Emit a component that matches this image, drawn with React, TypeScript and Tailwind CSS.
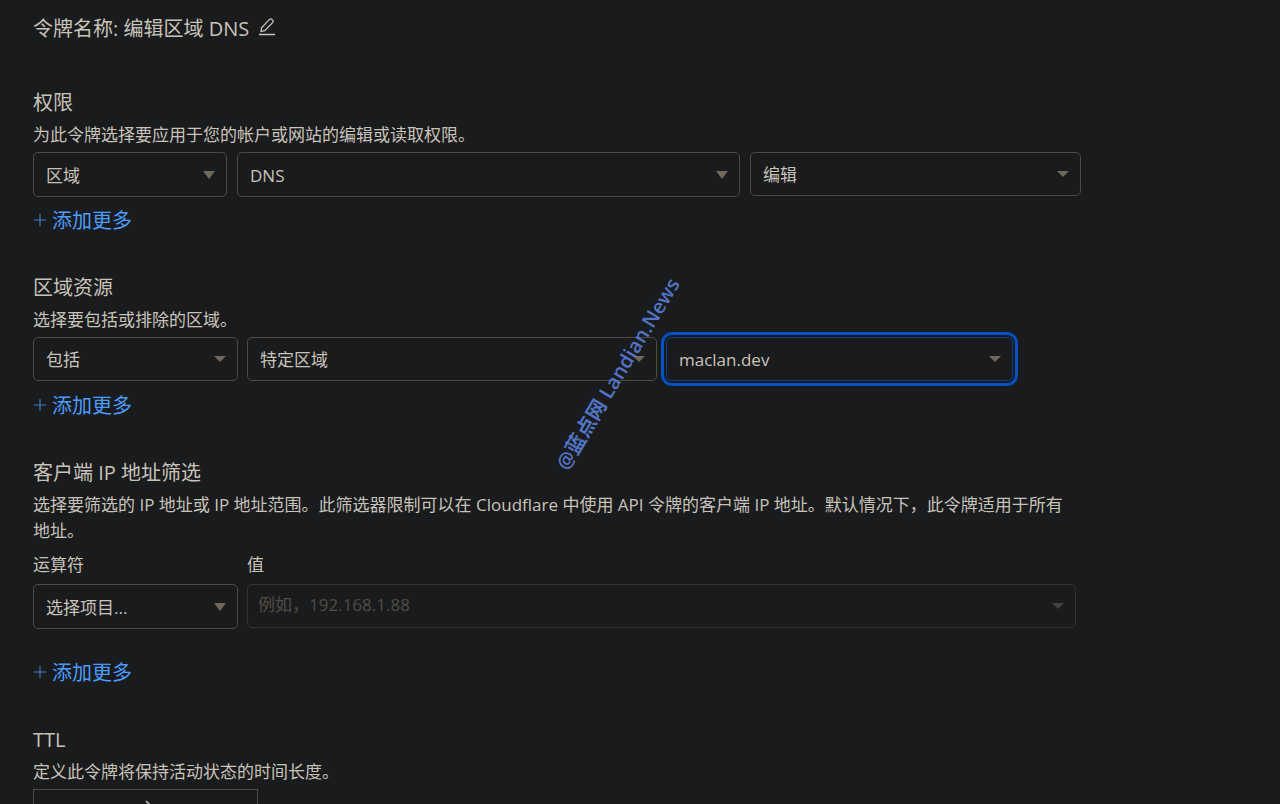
import { useId, useState } from "react";
import clsx from "clsx";

type SelectProps = {
  label: string;
  options: string[];
  tall?: boolean;
  focused?: boolean;
};

function Caret({ tall }: { tall?: boolean }) {
  return (
    <svg
      viewBox="0 0 12 8"
      className={clsx("pointer-events-none absolute top-1/2 right-3 w-3 -translate-y-1/2 fill-[#6f685d]", tall ? "h-2" : "h-1.5")}
      preserveAspectRatio="none"
      aria-hidden="true"
    >
      <path d="M0 0h12L6 8z" />
    </svg>
  );
}

function Select({ label, options, tall, focused }: SelectProps) {
  const [value, setValue] = useState(options[0]);

  return (
    <div
      className={clsx(
        "relative rounded-md",
        tall ? "h-[45px]" : "h-11",
        focused && "outline-3 outline-offset-2 outline-[#0051c3]"
      )}
    >
      <select
        aria-label={label}
        value={value}
        onChange={(e) => setValue(e.target.value)}
        className={clsx(
          "h-full w-full appearance-none rounded-[5px] border bg-transparent pt-0.5 pr-8 pl-3 text-[17px] outline-none",
          focused ? "border-[#0b3f8c]" : "border-[#4f4a42]"
        )}
      >
        {options.map((option) => (
          <option key={option}>{option}</option>
        ))}
      </select>
      <Caret tall={tall} />
    </div>
  );
}

function AddMore() {
  return (
    <button type="button" className="flex h-8 items-center gap-1.5 text-[20px] leading-8 text-[#4a9dff]">
      <svg viewBox="0 0 12 12" className="mb-0.5 ml-px h-3 w-3 stroke-[#3f83c4]" aria-hidden="true">
        <path d="M6 0v12M0 6h12" strokeWidth="1.1" />
      </svg>
      添加更多
    </button>
  );
}

function SectionHeader({ title, children }: { title: string; children: string }) {
  return (
    <header className="mb-1">
      <h2 className="text-[20px] leading-[38px]">{title}</h2>
      <p className="text-[17px] leading-[26px]">{children}</p>
    </header>
  );
}

function IpFilter() {
  const valueId = useId();

  return (
    <div className="mt-2 grid grid-cols-[205fr_829fr] gap-x-[9px]">
      <div>
        <div className="mb-1.5 text-[17px] leading-[26px]">运算符</div>
        <Select label="运算符" options={["选择项目..."]} tall />
      </div>
      <div>
        <label htmlFor={valueId} className="mb-1.5 block text-[17px] leading-[26px]">
          值
        </label>
        <div className="relative h-11 opacity-50">
          <input
            id={valueId}
            disabled
            placeholder="例如，192.168.1.88"
            className="h-full w-full rounded-[5px] border border-[#4f4a42] bg-transparent px-2.5 pb-1 text-[17px] placeholder:text-[#857e73]"
          />
          <Caret />
        </div>
      </div>
    </div>
  );
}

export default function App() {
  return (
    <main className="h-screen overflow-hidden bg-[#1a1b1c] pt-2.5 pr-8 pl-[33px] font-['Open_Sans','Noto_Sans_CJK_SC',sans-serif] text-[#c8c3ba]">
      <div className="relative max-w-[1048px]">
        <h1 className="mb-9 flex items-center gap-2.5 text-[20px] leading-[38px]">
          令牌名称: 编辑区域 DNS
          <button type="button" aria-label="编辑令牌名称">
            <svg viewBox="0 0 16 18" className="mb-1 h-[18px] w-4 fill-none stroke-current" aria-hidden="true">
              <path
                d="M2 13.5 2.5 9.8 10.3 1.6Q11.6.3 13 1.5L13.6 2.1Q14.7 3.4 13.6 4.6L5.8 12.6ZM0 16.5h16"
                strokeWidth="1.3"
              />
            </svg>
          </button>
        </h1>

        <section className="mb-8">
          <SectionHeader title="权限">为此令牌选择要应用于您的帐户或网站的编辑或读取权限。</SectionHeader>
          <div className="mb-2 grid grid-cols-[194fr_503fr_331fr] gap-2.5">
            <Select label="权限范围" options={["区域", "帐户", "用户"]} tall />
            <Select label="权限项目" options={["DNS"]} tall />
            <Select label="访问级别" options={["编辑", "读取"]} />
          </div>
          <AddMore />
        </section>

        <section className="mb-8">
          <SectionHeader title="区域资源">选择要包括或排除的区域。</SectionHeader>
          <div className="mb-2 grid h-[45px] max-w-[980px] grid-cols-[205fr_410fr_347fr] gap-[9px]">
            <Select label="包括或排除" options={["包括", "排除"]} />
            <Select label="区域类型" options={["特定区域", "所有区域"]} />
            <Select label="区域" options={["maclan.dev"]} focused />
          </div>
          <AddMore />
        </section>

        <section className="mb-8 max-w-[1043px]">
          <SectionHeader title="客户端 IP 地址筛选">
            选择要筛选的 IP 地址或 IP 地址范围。此筛选器限制可以在 Cloudflare 中使用 API 令牌的客户端 IP 地址。默认情况下，此令牌适用于所有地址。
          </SectionHeader>
          <IpFilter />
          <div className="mt-7">
            <AddMore />
          </div>
        </section>

        <section>
          <SectionHeader title="TTL">定义此令牌将保持活动状态的时间长度。</SectionHeader>
          <button
            type="button"
            aria-label="时间长度"
            className="flex h-10 w-[225px] items-center justify-center border border-[#4f4a42]"
          >
            <svg viewBox="0 0 18 18" className="h-[18px] w-[18px] fill-none stroke-current" aria-hidden="true">
              <path d="M1 9h16M9 1l8 8-8 8" strokeWidth="1.5" />
            </svg>
          </button>
        </section>

        <div className="pointer-events-none absolute top-[349px] left-[585px] -translate-x-1/2 rotate-[-59deg] text-[20px] font-semibold whitespace-nowrap text-[#5b80dc]/90">
          @蓝点网 Landian.News
        </div>
      </div>
    </main>
  );
}
